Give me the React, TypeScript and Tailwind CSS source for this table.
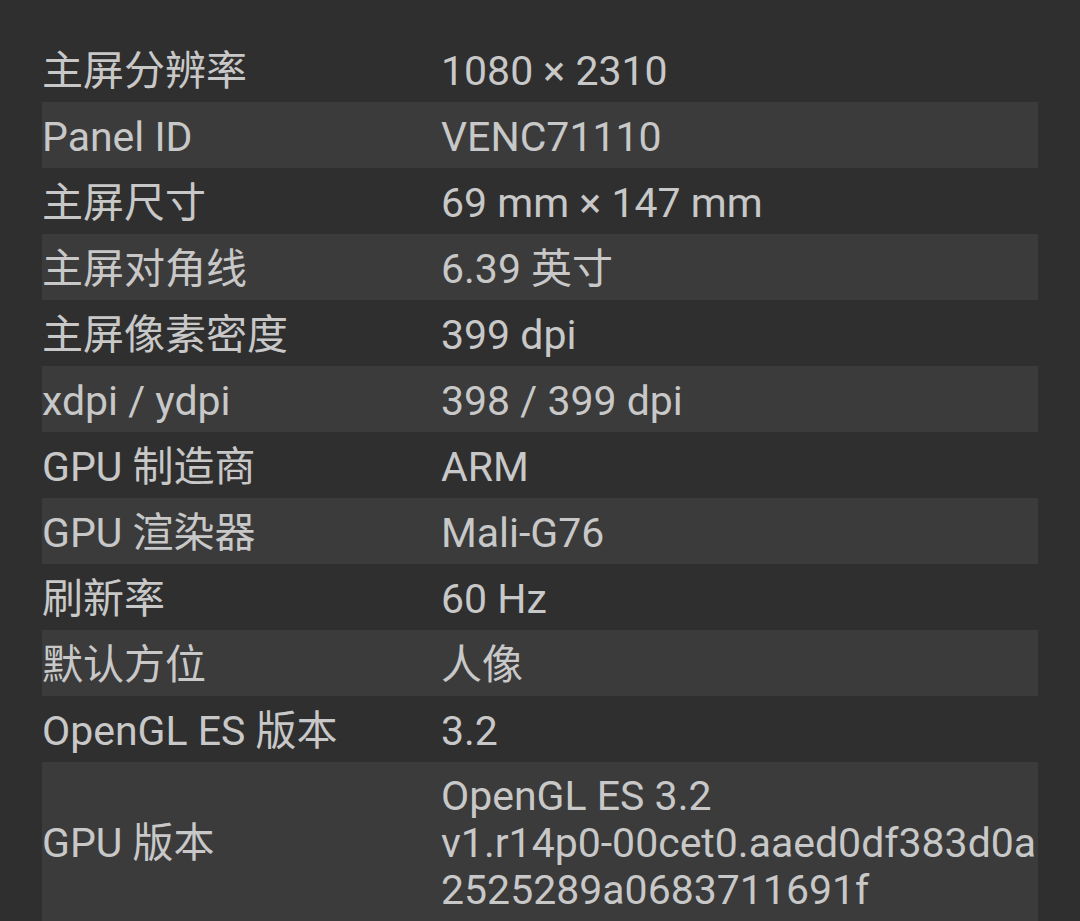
const rows: { label: string; value: string[] }[] = [
  { label: '主屏分辨率', value: ['1080 × 2310'] },
  { label: 'Panel ID', value: ['VENC71110'] },
  { label: '主屏尺寸', value: ['69 mm × 147 mm'] },
  { label: '主屏对角线', value: ['6.39 英寸'] },
  { label: '主屏像素密度', value: ['399 dpi'] },
  { label: 'xdpi / ydpi', value: ['398 / 399 dpi'] },
  { label: 'GPU 制造商', value: ['ARM'] },
  { label: 'GPU 渲染器', value: ['Mali-G76'] },
  { label: '刷新率', value: ['60 Hz'] },
  { label: '默认方位', value: ['人像'] },
  { label: 'OpenGL ES 版本', value: ['3.2'] },
  { label: 'GPU 版本', value: ['OpenGL ES 3.2', 'v1.r14p0-00cet0.aaed0df383d0a2525289a0683711691f'] },
];

export default function App() {
  return (
    <div
      className="min-h-[921px] bg-[#2f2f2f] pt-[36px] text-[41px] leading-[47px] text-[#c8c8c8]"
      style={{ fontFamily: 'Roboto, "Noto Sans CJK SC", sans-serif' }}
    >
      <div className="ml-[42px] w-[996px]">
        {rows.map((row, i) => (
          <div
            key={row.label}
            className={`flex min-h-[66px] items-center pt-[11px] pb-[7px] ${i % 2 === 1 ? 'bg-[#3b3b3b]' : ''}`}
          >
            <div className="w-[399px] shrink-0">{row.label}</div>
            <div className="min-w-0 flex-1 break-all">
              {row.value.map((line) => (
                <div key={line}>{line}</div>
              ))}
            </div>
          </div>
        ))}
      </div>
    </div>
  );
}
